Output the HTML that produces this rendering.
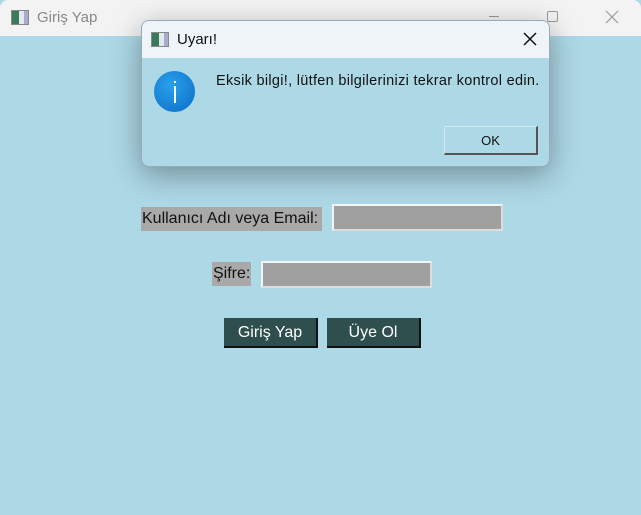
<!DOCTYPE html>
<html><head><style>
*{margin:0;padding:0;box-sizing:border-box}
body{width:641px;height:515px;position:relative;overflow:hidden;background:#add8e6;font-family:"Liberation Sans","DejaVu Sans",sans-serif}
.tb{position:absolute;left:0;top:0;width:641px;height:36px;background:#f3f3f3;border-radius:8px 8px 0 0}
.ico{position:absolute;width:18px;height:15px;border:1px solid #888;background:linear-gradient(90deg,#3a7a5c 0 45%,#dfe9ee 45% 75%,#aac 75%)}
.t{position:absolute;font-size:15px}
.dlg{position:absolute;left:141px;top:20px;width:409px;height:147px;border-radius:8px;overflow:hidden;background:#add8e6;border:1px solid #9ab;box-shadow:0 8px 30px rgba(0,0,0,.35)}
.dtb{position:absolute;left:0;top:0;width:100%;height:37px;background:#eff4f9}
.lab{position:absolute;background:#a9a9a9;font-size:16px;color:#111;line-height:24px;padding-left:1px}
.in{position:absolute;background:#a0a0a0;border:2px solid #f4f4f4;border-right-color:#ddd;border-bottom-color:#ddd;height:27px}
.btn{position:absolute;background:#2f4f4f;color:#fff;font-size:16px;text-align:center;line-height:30px;height:30px;border-bottom:2px solid #111;border-right:2px solid #111}
</style></head><body>
<div class="tb">
<div class="ico" style="left:11px;top:10px"></div>
<div class="t" style="left:37px;top:9px;color:#888">Giriş Yap</div>
<div style="position:absolute;left:489px;top:16px;width:10px;height:1px;background:#999"></div>
<div style="position:absolute;left:547px;top:11px;width:11px;height:11px;border:1px solid #999;border-radius:2px"></div>
<svg style="position:absolute;left:605px;top:10px" width="14" height="14"><path d="M1 1L13 13M13 1L1 13" stroke="#999" stroke-width="1.2"/></svg>
</div>
<div class="lab" style="left:141px;top:207px;width:181px">Kullanıcı Adı veya Email:</div>
<div class="in" style="left:332px;top:204px;width:171px"></div>
<div class="lab" style="left:212px;top:262px;width:39px">Şifre:</div>
<div class="in" style="left:261px;top:261px;width:171px"></div>
<div class="btn" style="left:224px;top:318px;width:94px">Giriş Yap</div>
<div class="btn" style="left:327px;top:318px;width:94px">Üye Ol</div>
<div class="dlg">
<div class="dtb">
<div class="ico" style="left:9px;top:11px"></div>
<div class="t" style="left:35px;top:10px;color:#111">Uyarı!</div>
<svg style="position:absolute;left:381px;top:11px" width="14" height="14"><path d="M1 1L13 13M13 1L1 13" stroke="#111" stroke-width="1.5"/></svg>
</div>
<div style="position:absolute;left:12px;top:50px;width:41px;height:41px;border-radius:50%;background:radial-gradient(circle at 40% 35%,#2aa0ea,#0a6dc8)"></div>
<div style="position:absolute;left:32px;top:60px;width:2px;height:2px;background:#fff"></div>
<div style="position:absolute;left:32px;top:65px;width:2px;height:17px;background:#fff"></div>
<div class="t" style="left:74px;top:52px;font-size:14.5px;letter-spacing:0.3px;color:#111">Eksik bilgi!, lütfen bilgilerinizi tekrar kontrol edin.</div>
<div style="position:absolute;left:302px;top:105px;width:94px;height:29px;border:1px solid #cfe8f0;border-right:2px solid #555;border-bottom:2px solid #555;text-align:center;font-size:13px;line-height:27px;color:#111">OK</div>
</div>
</body></html>
